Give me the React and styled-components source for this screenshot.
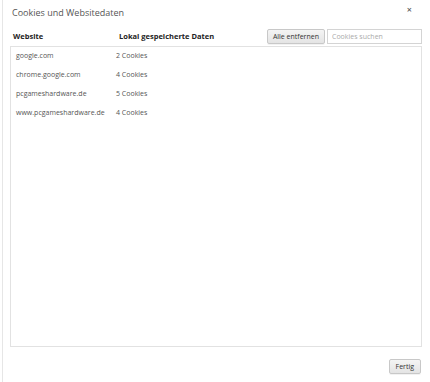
import React from "react";
import styled, { createGlobalStyle } from "styled-components";

const GlobalStyle = createGlobalStyle`
  html, body { margin: 0; padding: 0; background: #fff; }
  body { font-family: "Open Sans", "Noto Sans", sans-serif; color: #333; }
`;

const rows = [
  { site: "google.com", data: "2 Cookies" },
  { site: "chrome.google.com", data: "4 Cookies" },
  { site: "pcgameshardware.de", data: "5 Cookies" },
  { site: "www.pcgameshardware.de", data: "4 Cookies" },
];

const Dialog = styled.div`
  box-sizing: border-box;
  width: 428px;
  height: 382px;
  margin-left: 2px;
  border-left: 1px solid #e6e6e6;
  padding: 0 8px 0 7px;
  display: flex;
  flex-direction: column;
  position: relative;
`;

const Title = styled.h1`
  margin: 0;
  padding: 6px 0 0 2px;
  height: 14px;
  font-size: 9px;
  font-weight: 400;
  color: #555;
  line-height: 14px;
`;

const Close = styled.span`
  position: absolute;
  top: 3px;
  right: 18px;
  font-size: 9px;
  color: #555;
  font-weight: 600;
`;

const Toolbar = styled.div`
  display: flex;
  align-items: center;
  height: 18px;
  padding-top: 7px;
`;

const HeadCell = styled.div`
  font-size: 7.5px;
  font-weight: 700;
  color: #222;
  width: ${(p) => p.$w}px;
  padding-left: ${(p) => p.$pl || 0}px;
  box-sizing: border-box;
`;

const Spacer = styled.div`
  flex: 1;
`;

const Button = styled.button`
  font-family: inherit;
  font-size: 7px;
  color: #333;
  height: 15px;
  padding: 0 ${(p) => p.$px || 5}px;
  border: 1px solid #c8c8c8;
  border-radius: 2px;
  background: linear-gradient(#f4f4f4, #e4e4e4);
  box-shadow: 0 1px 0 rgba(0, 0, 0, 0.05);
  line-height: 13px;
`;

const Search = styled.input`
  font-family: inherit;
  font-size: 7px;
  margin-left: 2px;
  width: 95px;
  height: 15px;
  box-sizing: border-box;
  border: 1px solid #d4d4d4;
  padding: 0 4px;
  color: #333;
  &::placeholder { color: #aaa; }
`;

const List = styled.div`
  flex: 1;
  margin-top: 1px;
  border: 1px solid #e2e2e2;
`;

const Row = styled.div`
  display: flex;
  height: 19px;
  padding-bottom: 3px;
  box-sizing: border-box;
  align-items: center;
  font-size: 7px;
  color: #555;
`;

const Cell = styled.div`
  width: ${(p) => p.$w}px;
  padding-left: ${(p) => p.$pl || 0}px;
  box-sizing: border-box;
`;

const Footer = styled.div`
  height: 35px;
  box-sizing: border-box;
  flex-shrink: 0;
  display: flex;
  justify-content: flex-end;
  align-items: flex-start;
  padding: 12px 1px 0 0;
`;

export default function App() {
  return (
    <>
      <GlobalStyle />
      <Dialog>
        <Title>Cookies und Websitedaten</Title>
        <Close>×</Close>
        <Toolbar>
          <HeadCell $w={109} $pl={3}>Website</HeadCell>
          <HeadCell $w={120}>Lokal gespeicherte Daten</HeadCell>
          <Spacer />
          <Button>Alle entfernen</Button>
          <Search placeholder="Cookies suchen" />
        </Toolbar>
        <List>
          {rows.map((r) => (
            <Row key={r.site}>
              <Cell $w={105} $pl={5}>{r.site}</Cell>
              <Cell $w={100}>{r.data}</Cell>
            </Row>
          ))}
        </List>
        <Footer>
          <Button $px={6}>Fertig</Button>
        </Footer>
      </Dialog>
    </>
  );
}
